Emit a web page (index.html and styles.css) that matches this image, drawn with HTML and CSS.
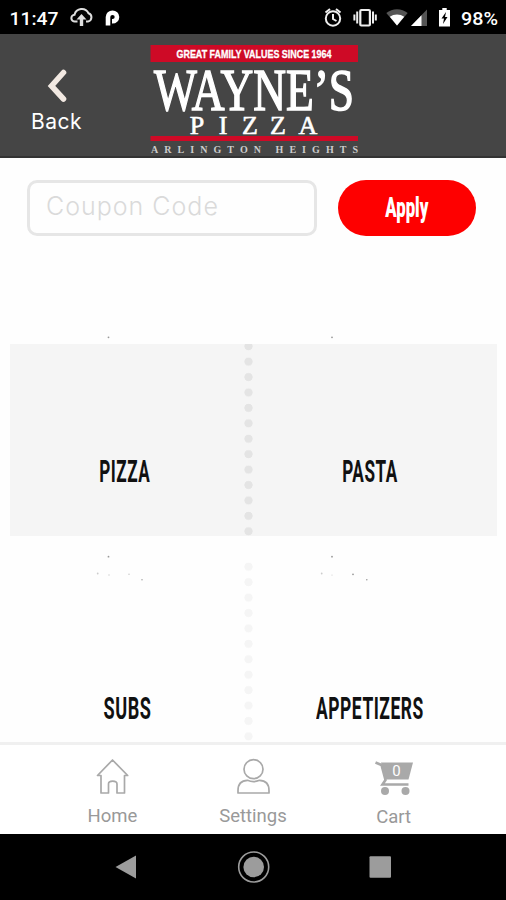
FILE: index.html
```
<!DOCTYPE html>
<html lang="en">
<head>
  <meta charset="utf-8">
  <title>Wayne's Pizza</title>
  <link rel="stylesheet" href="styles.css">
</head>
<body>
  <div class="status-bar">
    <svg width="506" height="34" viewBox="0 0 506 34">
      <text x="9.500" y="25" textLength="49" lengthAdjust="spacingAndGlyphs">11:47</text>
      <!-- cloud upload -->
      <g fill="none" stroke="#ddd" stroke-width="2">
        <path d="M77.500 21.500H75a3.400 3.400 0 0 1-.5-6.800 7.500 7.500 0 0 1 14-1.500 4.300 4.300 0 0 1-.5 8.300h-2"/>
        <path d="M81.500 26v-8" stroke-width="3.400"/>
      </g>
      <path d="M76.500 19.500l5-5.500 5 5.500z" fill="#ddd"/>
      <path d="M108 25.500V17a4.500 4.300 0 1 1 4.500 4.300H112" fill="none" stroke="#fff" stroke-width="4.600"/>
      <!-- alarm -->
      <g fill="none" stroke="#eee" stroke-width="2">
        <circle cx="333" cy="18.500" r="7.200"/>
        <path d="M333 14v5l3.500 2M325.500 12.500l4.500-3.500M340.500 12.500L336 9"/>
      </g>
      <!-- vibrate -->
      <g fill="none" stroke="#eee" stroke-width="2.200">
        <rect x="360.300" y="10" width="9.600" height="15.500" rx="1"/>
        <path d="M357.200 11.500v12M373 11.500v12M354.400 14.500v6M375.800 14.500v6" stroke-width="2"/>
      </g>
      <!-- wifi -->
      <path d="M397 25.500L386.300 13a17 17 0 0 1 21.400 0z" fill="#555"/>
      <path d="M397 25.500L389.800 16.800a12 12 0 0 1 14.400 0z" fill="#fff"/>
      <!-- signal -->
      <path d="M411 26L427 9.500V26z" fill="#555"/>
      <path d="M411 26L421.500 15.200V26z" fill="#fff"/>
      <!-- battery -->
      <path d="M439 10h3.300V8h4.400v2h3.300v16.500h-11z" fill="#fff"/>
      <path d="M446 12l-4.500 6.500h2.500l-1 5.500 4.500-7H445z" fill="#000"/>
      <text x="461" y="25" textLength="37" lengthAdjust="spacingAndGlyphs">98%</text>
    </svg>
  </div>

  <div class="header">
    <div class="back">
      <svg width="24" height="38" viewBox="0 0 24 38">
        <path d="M18.500 5.500L6.500 19 18.500 32" fill="none" stroke="#f2e9e2" stroke-width="5.600" stroke-linecap="round"/>
      </svg>
      <span>Back</span>
    </div>
    <svg class="logo" width="210" height="114" viewBox="0 0 210 114">
      <rect x=".5" y="1" width="207.500" height="17" fill="#ce0a26"/>
      <text class="logo-tag" x="26.500" y="13.500" textLength="155" lengthAdjust="spacingAndGlyphs">GREAT FAMILY VALUES SINCE 1964</text>
      <text class="logo-name" transform="translate(4 66) scale(1 1.230)" x="0" y="0" textLength="200" lengthAdjust="spacingAndGlyphs">WAYNE’S</text>
      <g class="logo-pizza" text-anchor="middle">
        <text x="47" y="89.500">P</text>
        <text x="73" y="89.500">I</text>
        <text x="100" y="89.500">Z</text>
        <text x="128" y="89.500">Z</text>
        <text x="158" y="89.500">A</text>
      </g>
      <rect x=".5" y="92" width="207.500" height="5" fill="#ce0a26"/>
      <text class="logo-city" x="1" y="108.500" textLength="207">ARLINGTON HEIGHTS</text>
    </svg>
  </div>

  <div class="content">
    <div class="coupon">
      <div class="coupon-input"><span>Coupon Code</span></div>
      <div class="apply"><span>Apply</span></div>
    </div>

    <div class="menu-row shaded">
      <div class="menu-item"><span class="pizza">PIZZA</span></div>
      <div class="dots"></div>
      <div class="menu-item"><span class="pasta">PASTA</span></div>
    </div>
    <div class="menu-row">
      <div class="menu-item"><span class="subs">SUBS</span></div>
      <div class="dots"></div>
      <div class="menu-item"><span class="appetizers">APPETIZERS</span></div>
    </div>

    <svg class="specks" width="506" height="260" viewBox="0 325 506 260">
      <g fill="#999">
        <circle cx="108.500" cy="337.300" r=".9"/>
        <circle cx="332" cy="337.300" r=".9"/>
        <circle cx="108.500" cy="556.700" r=".9"/>
        <circle cx="332" cy="556.700" r=".9"/>
        <circle cx="142" cy="579.700" r=".7"/>
        <circle cx="353" cy="574.300" r=".9"/>
        <circle cx="366.800" cy="579.700" r=".8"/>
      </g>
      <g fill="#ccc">
        <circle cx="97.700" cy="573.500" r=".9"/>
        <circle cx="109" cy="575" r=".7"/>
        <circle cx="129" cy="574.300" r=".8"/>
        <circle cx="321.700" cy="573.500" r=".9"/>
        <circle cx="332" cy="575" r=".6"/>
      </g>
    </svg>
  </div>

  <div class="tab-bar">
    <div class="tab">
      <svg width="40" height="40" viewBox="0 0 40 40">
        <path d="M20.500 4L5.500 19.500H9V37h7.500V28q0-2.800 4.200-2.800T25 28v9h7.500V19.500h3.200z" fill="none" stroke="#a9a9a9" stroke-width="1.700" stroke-linejoin="round"/>
      </svg>
      <span class="home">Home</span>
    </div>
    <div class="tab">
      <svg width="40" height="40" viewBox="0 0 40 40">
        <g fill="none" stroke="#a9a9a9" stroke-width="1.700">
          <circle cx="20.500" cy="13.200" r="9.500"/>
          <path d="M5 37V34.500q0-10 9.500-10.200 6 2.500 12 0 9.500.2 9.500 10.200V37z" stroke-linejoin="round"/>
        </g>
      </svg>
      <span class="settings">Settings</span>
    </div>
    <div class="tab">
      <svg width="40" height="40" viewBox="0 0 40 40">
        <path d="M1.500 6.500l6 2.500 4 15-3 4.500h26" fill="none" stroke="#a9a9a9" stroke-width="2.600"/>
        <path d="M7 6.500H39L34.500 23.500H11z" fill="#a9a9a9"/>
        <circle cx="11" cy="35" r="4" fill="#a9a9a9"/>
        <circle cx="31.500" cy="35" r="4" fill="#a9a9a9"/>
        <text class="cart-count" x="22.500" y="20" text-anchor="middle">0</text>
      </svg>
      <span class="cart">Cart</span>
    </div>
  </div>

  <div class="nav-bar">
    <svg width="506" height="66" viewBox="0 0 506 66">
      <path d="M115.500 33L136 21.500v23z" fill="#9c9c9c"/>
      <circle cx="253.700" cy="33" r="10.300" fill="#9c9c9c"/>
      <circle cx="253.700" cy="33" r="15" fill="none" stroke="#9c9c9c" stroke-width="1.600"/>
      <rect x="369.500" y="22.300" width="21.500" height="21.500" rx="1" fill="#9c9c9c"/>
    </svg>
  </div>
</body>
</html>
```
FILE: styles.css
```
body {
  margin: 0;
  width: 506px;
  height: 900px;
  display: flex;
  flex-direction: column;
  overflow: hidden;
  background: #fefefe;
  font-family: Roboto, "Liberation Sans", sans-serif;
}
svg {
  display: block;
}
.status-bar {
  height: 34px;
  background: #000;
}
.status-bar text {
  font-size: 19px;
  font-weight: 500;
  fill: #fff;
}
.header {
  height: 124px;
  box-sizing: border-box;
  display: flex;
  background: #454545;
  border-bottom: 2px solid #333;
}
.back {
  width: 113px;
  margin-right: 37px;
  padding-top: 33px;
  display: flex;
  flex-direction: column;
  align-items: center;
  color: #fff;
  font: 400 21px/24px Inter, sans-serif;
}
.back span {
  margin-top: 5px;
  letter-spacing: 0.5px;
}
.logo {
  margin-top: 10px;
  overflow: visible;
}
.logo text {
  fill: #fff;
}
.logo .logo-tag {
  font: bold 10px "Liberation Sans", sans-serif;
  stroke: #fff;
  stroke-width: 0.3px;
}
.logo .logo-name {
  font: 48px "Liberation Serif", serif;
  stroke: #fff;
  stroke-width: 1.2px;
}
.logo-pizza {
  font: 26px "Liberation Serif", serif;
  stroke: #fff;
  stroke-width: 0.6px;
}
.logo .logo-city {
  font: bold 10px "Liberation Serif", serif;
  fill: #ccc;
}
.content {
  position: relative;
  height: 584px;
  overflow: hidden;
}
.coupon {
  display: flex;
  gap: 21px;
  padding: 22px 27px 0;
  height: 164px;
}
.coupon-input {
  width: 290px;
  height: 56px;
  box-sizing: border-box;
  padding-left: 16px;
  border: 3px solid #e6e6e6;
  border-radius: 10px;
  color: #dadada;
  font: 300 25px/46px Inter, sans-serif;
}
.coupon-input span {
  letter-spacing: 1px;
  white-space: nowrap;
}
.apply {
  width: 138px;
  height: 56px;
  border-radius: 28px;
  background: #fe0000;
  color: #fff;
  display: flex;
  align-items: center;
  justify-content: center;
  font-size: 27px;
  font-weight: 900;
}
.apply span {
  transform: scaleX(0.62);
}
.menu-row {
  height: 192px;
  margin: 0 9px 0 10px;
  display: flex;
}
.menu-row + .menu-row {
  margin-top: 24px;
}
.shaded {
  background: #f5f5f5;
}
.menu-item {
  width: 234px;
  display: flex;
  justify-content: center;
  padding-top: 107px;
  box-sizing: border-box;
  font-size: 32px;
  font-weight: 700;
  line-height: 40px;
  color: #111;
}
.menu-row + .menu-row .menu-item {
  padding-top: 128px;
}
.menu-item span {
  letter-spacing: 1px;
  transform: scaleX(0.535);
}
.menu-item .pizza {
  margin-right: 5px;
}
.menu-item .appetizers {
  transform: scaleX(0.545);
}
.menu-item .subs {
  transform: scaleX(0.565);
}
.dots {
  width: 9px;
  background: radial-gradient(circle at 50% 50%, #f5f5f5 3.8px, transparent 4.4px) 0 -1px / 9px 15.43px repeat-y;
}
.menu-row + .menu-row .dots {
  height: 190px;
}
.shaded .dots {
  background: radial-gradient(circle at 50% 50%, #e4e4e4 3.8px, transparent 4.4px) 0 -5.5px / 9px 15.43px repeat-y;
}
.specks {
  position: absolute;
  left: 0;
  top: 167px;
}
.tab-bar {
  height: 92px;
  box-sizing: border-box;
  border-top: 3px solid #f0f0f0;
  padding: 11px 42px 0;
  display: flex;
  background: #fff;
}
.tab {
  width: 141px;
  display: flex;
  flex-direction: column;
  align-items: center;
  color: #999;
  font-size: 18.5px;
  line-height: 24px;
}
.tab span {
  margin-top: 8px;
}
.tab .cart {
  margin-top: 9px;
}
.tab .cart-count {
  font-size: 15px;
  fill: #fff;
}
.nav-bar {
  height: 66px;
  background: #000;
}
```
